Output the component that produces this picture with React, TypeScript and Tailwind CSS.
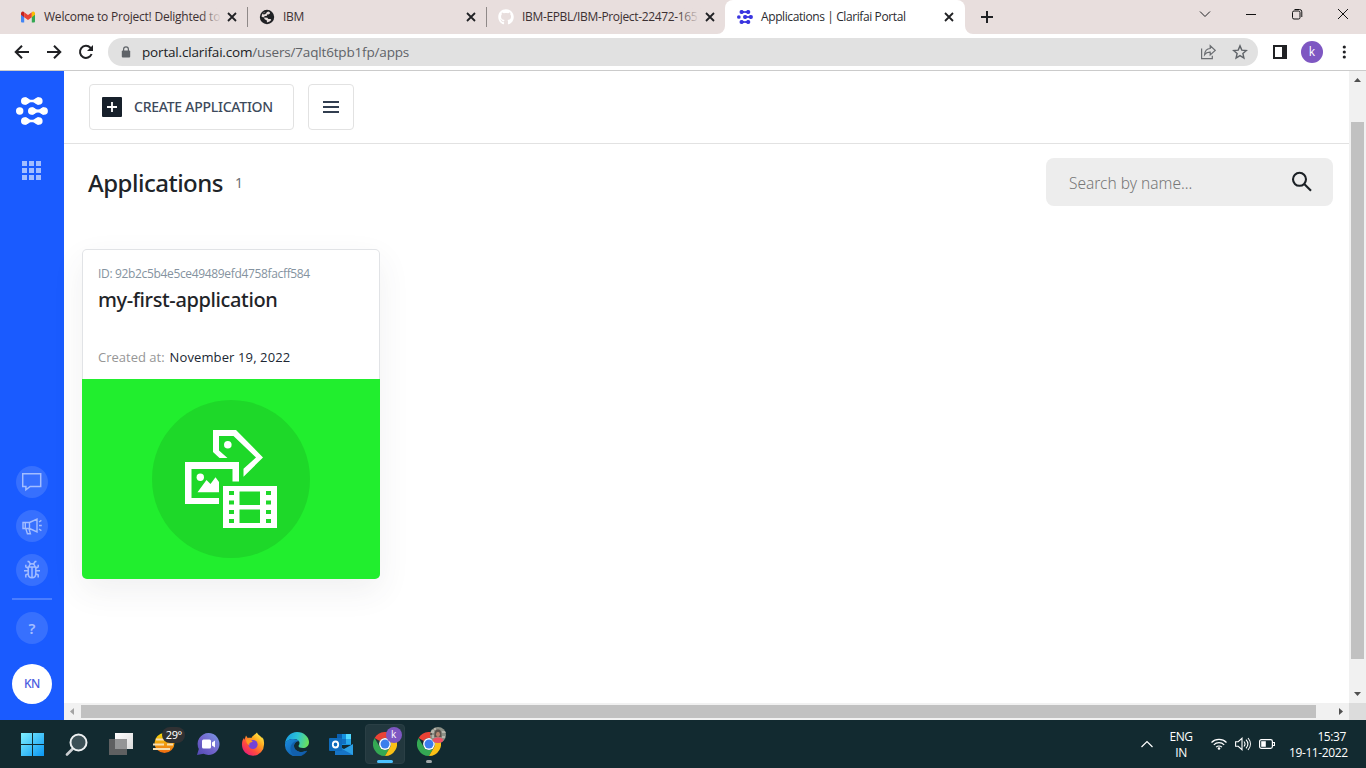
import React from "react";
import { FaGithub } from "react-icons/fa";

const CloseIcon = () => (
  <svg className="h-2.5 w-2.5 shrink-0" viewBox="0 0 10 10" fill="none" stroke="#202124" strokeWidth="1.8">
    <path d="M1 1l8 8M9 1L1 9" />
  </svg>
);

const ClarifaiLogo = ({ className, color }: { className: string; color: string }) => (
  <svg className={className} viewBox="0 0 32 28" fill={color}>
    <circle cx="8.8" cy="4" r="3.8" />
    <circle cx="22.8" cy="4" r="3.8" />
    <path d="M8.8 .2C12 .4 12.5 2.7 15.8 2.7S19.6.4 22.8 .2V7.8C19.6 7.6 19 5.3 15.8 5.3S12 7.6 8.8 7.8z" />
    <circle cx="3.7" cy="14" r="3.7" />
    <circle cx="15.8" cy="14" r="3.8" />
    <circle cx="28.1" cy="14" r="3.8" />
    <path d="M15.8 10.2C18.6 10.4 19.6 12.5 22 12.5S25.2 10.4 28 10.2V17.8C25.2 17.6 24.4 15.5 22 15.5S18.6 17.6 15.8 17.8z" />
    <circle cx="8.8" cy="24" r="3.8" />
    <circle cx="22.8" cy="24" r="3.8" />
    <path d="M8.8 20.2C12 20.4 12.5 22.7 15.8 22.7S19.6 20.4 22.8 20.2V27.8C19.6 27.6 19 25.3 15.8 25.3S12 27.6 8.8 27.8z" />
  </svg>
);

const GmailIcon = () => (
  <svg className="h-4 w-4 shrink-0" viewBox="0 0 16 16">
    <path d="M1 4.2h3.2V13.5H2A1 1 0 0 1 1 12.5z" fill="#4285f4" />
    <path d="M11.8 4.2H15v8.3a1 1 0 0 1-1 1h-2.2z" fill="#34a853" />
    <path d="M1 4.2A1.7 1.7 0 0 1 3.7 2.8L4.2 3.2V8.2L1 5.8z" fill="#c5221f" />
    <path d="M4.2 3.2L8 6.1l3.8-2.9v5L8 11.1 4.2 8.2z" fill="#ea4335" />
    <path d="M11.8 3.2l.5-.4A1.7 1.7 0 0 1 15 4.2v1.6l-3.2 2.4z" fill="#fbbc04" />
  </svg>
);

const GlobeIcon = () => (
  <svg className="h-4 w-4 shrink-0" viewBox="0 0 16 16">
    <circle cx="8" cy="8" r="7.2" fill="#202124" />
    <path d="M9.3 2.4l1.5.8.2 1.3-1.6 1.1H8.1L7.7 7H5.9L4.4 8.4l-1.9-.8.7-2.4 2-2.2 1.9.4z" fill="#e8dedd" />
    <path d="M5 8.6l3.4.1.9 1.2h2.3l.7 1-1.7 1.7-2.7 1v-2.2L5.6 10.300z" fill="#e8dedd" />
    <path d="M4 4l3-1.200.8 1-1.800 1.500-1.700.200z" fill="#202124" />
  </svg>
);

const Tab = ({ icon, label, fade }: { icon: React.ReactNode; label: React.ReactNode; fade?: boolean }) => (
  <div className="flex h-[34px] w-[239px] shrink-0 items-center pr-2.5 pl-3">
    {icon}
    <div className="relative ml-2 w-[176px] shrink-0 text-[12px] leading-5 whitespace-nowrap text-[#3c3032]">
      {label}
      {fade && <div className="absolute inset-y-0 -right-1 w-6 bg-linear-to-r from-[#e8dedd]/0 to-[#e8dedd] to-90%" />}
    </div>
    <div className="ml-auto flex">
      <CloseIcon />
    </div>
  </div>
);

const TabStrip = () => (
  <div className="flex h-[34px] items-center bg-[#e8dedd] pl-2">
    <Tab icon={<GmailIcon />} fade label={<span className="tracking-[-0.22px]">Welcome to Project! Delighted to</span>} />
    <div className="-mr-px h-5 w-px bg-[#8f8988]" />
    <Tab icon={<GlobeIcon />} label={<span className="tracking-[-0.3px]">IBM</span>} />
    <div className="-mr-px h-5 w-px bg-[#8f8988]" />
    <Tab
      icon={<FaGithub className="h-4 w-4 shrink-0 text-white" />}
      fade
      label={<span className="tracking-[-0.34px]">IBM-EPBL/IBM-Project-22472-165</span>}
    />
    <div className="relative flex h-[34px] w-[240px] items-center rounded-t-lg bg-white pr-[11px] pl-3 text-[12px]">
      <svg className="absolute bottom-0 -left-2 h-2 w-2" viewBox="0 0 8 8" fill="#fff">
        <path d="M8 0v8H0a8 8 0 0 0 8-8" />
      </svg>
      <svg className="absolute -right-2 bottom-0 h-2 w-2" viewBox="0 0 8 8" fill="#fff">
        <path d="M0 0v8h8a8 8 0 0 1-8-8" />
      </svg>
      <ClarifaiLogo className="h-4 w-4" color="#3a35e0" />
      <span className="ml-2 tracking-[-0.4px] whitespace-nowrap text-[#2b2b2f]">Applications | Clarifai Portal</span>
      <div className="ml-auto flex">
        <CloseIcon />
      </div>
    </div>
    <svg className="ml-4 h-3 w-3" viewBox="0 0 12 12" stroke="#202124" strokeWidth="2">
      <path d="M6 0v12M0 6h12" />
    </svg>
    <div className="mr-[17px] -mt-[6px] ml-auto flex items-center gap-[34px]">
      <svg className="h-3 w-3" viewBox="0 0 12 12" fill="none" stroke="#202124">
        <path d="M1 3.5l5 5 5-5" />
      </svg>
      <svg className="h-3 w-3" viewBox="0 0 12 12" stroke="#111">
        <path d="M1 6.5h10" />
      </svg>
      <svg className="h-3 w-3" viewBox="0 0 12 12" fill="none" stroke="#111">
        <rect x="1.5" y="3" width="7.5" height="8" rx="1.5" />
        <path d="M3.5 1.5H8.5a2.3 2.3 0 0 1 2.3 2.3V9" />
      </svg>
      <svg className="h-3 w-3" viewBox="0 0 12 12" fill="none" stroke="#111">
        <path d="M1 1l10 10M11 1L1 11" />
      </svg>
    </div>
  </div>
);

const Toolbar = () => (
  <div className="flex h-[37px] items-center border-b border-[#cbcbcb] bg-white">
    <svg className="ml-[14px] h-4 w-4" viewBox="0 0 16 16" fill="none" stroke="#202124" strokeWidth="2">
      <path d="M15 8H2M8 1.7L1.7 8 8 14.3" />
    </svg>
    <svg className="ml-4 h-4 w-4" viewBox="0 0 16 16" fill="none" stroke="#202124" strokeWidth="2">
      <path d="M1 8h13M8 1.7L14.3 8 8 14.3" />
    </svg>
    <svg className="ml-4 h-4 w-4" viewBox="0 0 16 16" fill="none" stroke="#202124" strokeWidth="2">
      <path d="M13.6 10A6 6 0 1 1 12.4 3.8L13.5 5" />
      <path d="M15 1v6H9z" fill="#202124" stroke="none" />
    </svg>
    <div className="ml-[14px] flex h-7 w-[1150px] items-center rounded-full bg-[#e1e1e1] pr-[10px] pl-3">
      <svg className="h-3 w-3" viewBox="0 0 12 12">
        <path d="M3.6 5V3.2a2.4 2.4 0 0 1 4.8 0V5" fill="none" stroke="#5f6368" strokeWidth="1.2" />
        <rect x="1.8" y="4.5" width="8.4" height="7" rx="1" fill="#5f6368" />
      </svg>
      <span className="ml-[10px] text-[13.5px] tracking-[-0.17px] text-[#5f6368]">
        <span className="text-[#202124]">portal.clarifai.com</span>/users/7aqlt6tpb1fp/apps
      </span>
      <svg className="ml-auto h-4 w-4" viewBox="0 0 16 16" fill="none" stroke="#6b6e72" strokeWidth="1.2">
        <path d="M1.6 4.5v10.2h10.7v-3" />
        <path d="M4.6 10.7C4.9 6.5 7 4.6 10.2 4.5V1.7l5 4.7-5 4.5V8.2C7.8 8.1 6 8.7 4.6 10.7z" />
      </svg>
      <svg className="ml-4 h-4 w-4" viewBox="0 0 16 16" fill="none" stroke="#5f6368" strokeWidth="1.4">
        <path d="M8 1.9l1.8 4.2 4.5.4-3.4 3 1 4.5L8 11.6 4.1 14l1-4.5-3.4-3 4.5-.4z" />
      </svg>
    </div>
    <svg className="ml-[15px] h-[14px] w-[14px]" viewBox="0 0 14 14">
      <path d="M0 0h14v14H0z" fill="#202124" />
      <path d="M2 2h7v10H2z" fill="#fff" />
    </svg>
    <div className="ml-[14px] flex h-[22px] w-[22px] items-center justify-center rounded-full bg-[#7e57c2] text-[12px] text-white">k</div>
    <svg className="ml-[19px] h-[14px] w-1" viewBox="0 0 4 14" fill="#202124">
      <circle cx="2.3" cy="2" r="1.6" />
      <circle cx="2.3" cy="7" r="1.6" />
      <circle cx="2.3" cy="12" r="1.6" />
    </svg>
  </div>
);

const Round = ({ children }: { children: React.ReactNode }) => (
  <div className="flex h-8 w-8 items-center justify-center rounded-full bg-[#3770fe]">{children}</div>
);

const Sidebar = () => (
  <div className="flex w-16 shrink-0 flex-col items-center bg-[#1a5bff]">
    <ClarifaiLogo className="mt-[26px] h-7 w-8" color="#fff" />
    <div className="mt-9 mr-px grid grid-cols-3 gap-[2px]">
      {Array.from({ length: 9 }, (_, i) => (
        <span key={i} className="h-[5px] w-[5px] bg-[#a3bdff]" />
      ))}
    </div>
    <div className="mt-auto flex flex-col items-center gap-3">
      <Round>
        <svg className="h-5 w-5" viewBox="0 0 20 20" fill="none" stroke="#a3bdff" strokeWidth="1.5">
          <path d="M.7 1.7h18v12.8H8.2L3.9 17.8v-3.3H.7z" />
        </svg>
      </Round>
      <Round>
        <svg className="h-5 w-5" viewBox="0 0 20 20" fill="none" stroke="#a3bdff" strokeWidth="1.4">
          <path d="M1 6.5h6.5v6H1zM3.3 6.5v6M7.5 6.5L15 3v13l-7.5-3.5M3.8 12.5l1.6 5.2h3l-1.5-5.2M17 6l2.4-1.6M17 9.5h2.8M17 13l2.4 1.6" />
        </svg>
      </Round>
      <Round>
        <svg className="h-5 w-5" viewBox="0 0 20 20" fill="none" stroke="#a3bdff" strokeWidth="1.5">
          <path d="M6.2 7h7.6v6.5c0 2.5-1.5 4.3-3.8 4.3s-3.8-1.8-3.8-4.3zM7.2 6.7C7 2.8 13 2.8 12.8 6.7M5.5 1.5h1.3L8.5 4M14.5 1.5h-1.3L11.5 4M10 7v10.7M2 10.8h4.2M13.8 10.8H18M6.2 8.5L3.8 6.9V4.8M13.8 8.500l2.4-1.6V4.8M6.3 13.7L3.8 15v2.5M13.7 13.7l2.5 1.3v2.5" />
        </svg>
      </Round>
      <div className="h-[2px] w-10 bg-[#4a7dff]" />
      <Round>
        <span className="font-['Noto_Sans',sans-serif] text-[15px] font-semibold text-[#a3bdff]">?</span>
      </Round>
    </div>
    <div className="mt-5 mb-4 flex h-10 w-10 items-center justify-center rounded-full bg-white font-['Noto_Sans',sans-serif] text-[12px] font-medium tracking-[-0.4px] text-[#4c5de0]">
      KN
    </div>
  </div>
);

const MediaArt = () => (
  <svg className="h-[158px] w-[158px]" viewBox="0 0 158 158">
    <circle cx="79" cy="79" r="79" fill="#1ed829" />
    <path fillRule="evenodd" fill="#fff" d="M61 30h23l27 27.5-19.5 19.2v-8L104 57.5 81.5 36H67v14.5l8.5 7.5h-8L61 52z" />
    <circle cx="75.8" cy="44.8" r="3.8" fill="#fff" />
    <path d="M33 62h54v19.5h-6.5V69H39.5v29H67v6H33z" fill="#fff" />
    <circle cx="48.3" cy="77.3" r="3.7" fill="#fff" />
    <path d="M45.5 92.3L54.5 80l4 4 5-6.7L67 82v10.3z" fill="#fff" />
    <path
      fillRule="evenodd"
      fill="#fff"
      d="M71 86h54v42H71zM87.5 91.5V105h20.5V91.5zM87.5 109.5V123h20.5v-13.5zM77 91h5v4h-5zM77 100.500h5v4h-5zM77 110h5v4h-5zM77 119h5v4h-5zM114 91h5v4h-5zM114 100.500h5v4h-5zM114 110h5v4h-5zM114 119h5v4h-5z"
    />
  </svg>
);

const Page = () => (
  <div className="flex min-w-0 flex-1 flex-col bg-white">
    <div className="flex h-[73px] shrink-0 items-start gap-[14px] border-b border-[#e2e2e2] pt-[13px] pl-[25px]">
      <button className="flex h-[46px] w-[205px] items-center rounded border border-[#e2e2e2] pl-3">
        <svg className="h-5 w-5" viewBox="0 0 20 20">
          <rect width="20" height="20" rx="1" fill="#17202b" />
          <path d="M10 5v10M5 10h10" stroke="#fff" strokeWidth="1.8" />
        </svg>
        <span className="ml-3 pb-0.5 font-['Noto_Sans',sans-serif] text-[14px] font-medium tracking-[-0.25px] whitespace-nowrap text-[#3d4a5c]">
          CREATE APPLICATION
        </span>
      </button>
      <button className="flex h-[46px] w-[46px] items-center justify-center rounded border border-[#e2e2e2]">
        <svg className="h-3 w-4" viewBox="0 0 16 12" fill="#323e50">
          <path d="M0 0h16v2H0zM0 5h16v2H0zM0 10h16v2H0z" />
        </svg>
      </button>
    </div>
    <div className="mt-[14px] flex h-12 items-center pr-4 pl-6 font-['Noto_Sans',sans-serif]">
      <h1 className="w-[147px] pt-0.5 text-[24px] font-medium tracking-[-0.5px] text-[#202428]">Applications</h1>
      <span className="pt-px text-[14px] text-[#6b7075]">1</span>
      <div className="ml-auto flex h-12 w-[287px] items-center justify-between rounded-lg bg-[#ededed] pr-[20px] pl-[23px]">
        <span className="pt-1 text-[15.5px] font-light text-[#777]">Search by name...</span>
        <svg className="h-[22px] w-[22px]" viewBox="0 0 22 22" fill="none" stroke="#1c2126" strokeWidth="2.1">
          <circle cx="8.5" cy="8.3" r="6.5" />
          <path d="M13 12.8l7 7" />
        </svg>
      </div>
    </div>
    <div className="mt-[43px] ml-[18px] flex h-[330px] w-[298px] flex-col overflow-hidden rounded-[5px] bg-white inset-ring inset-ring-[#e1e3e6] shadow-[0_12px_32px_rgba(60,64,80,0.08)]">
      <div className="h-[130px] pt-4 pl-4">
        <div className="text-[12px] leading-[18px] tracking-[-0.34px] text-[#8593a0]">ID: 92b2c5b4e5ce49489efd4758facff584</div>
        <div className="mt-[5px] font-['Noto_Sans',sans-serif] text-[20px] leading-6 font-medium tracking-[-0.37px] text-[#1f2428]">
          my-first-application
        </div>
        <div className="mt-[35px] flex gap-[5px] text-[13px] leading-5">
          <span className="text-[#969696]">Created at:</span>
          <span className="tracking-[0.12px] text-[#202733]">November 19, 2022</span>
        </div>
      </div>
      <div className="flex flex-1 items-center justify-center bg-[#21ee2e]">
        <MediaArt />
      </div>
    </div>
  </div>
);

const ScrollbarV = () => (
  <div className="flex w-[17px] shrink-0 flex-col items-center bg-[#f1f1f1]">
    <svg className="mt-[7px] h-1 w-[7px]" viewBox="0 0 7 4" fill="#505050">
      <path d="M3.5 0L7 4H0z" />
    </svg>
    <div className="mt-10 h-[537px] w-[13px] bg-[#c1c1c1]" />
    <svg className="mt-[33px] h-1 w-[7px]" viewBox="0 0 7 4" fill="#505050">
      <path d="M0 0h7L3.5 4z" />
    </svg>
    <div className="mt-auto h-[17px] w-[17px] bg-[#dcdcdc]" />
  </div>
);

const ScrollbarH = () => (
  <div className="flex h-[17px] shrink-0 items-center bg-[#f1f1f1]">
    <svg className="ml-1.5 h-[7px] w-1" viewBox="0 0 4 7" fill="#a3a3a3">
      <path d="M4 0v7L0 3.5z" />
    </svg>
    <div className="ml-[7px] h-[13px] w-[1235px] bg-[#c1c1c1]" />
    <svg className="ml-[23px] h-[7px] w-1" viewBox="0 0 4 7" fill="#505050">
      <path d="M0 0l4 3.5L0 7z" />
    </svg>
  </div>
);

const Cell = ({ children }: { children: React.ReactNode }) => (
  <div className="relative flex h-12 w-[44.1px] items-center justify-center">{children}</div>
);

const ChromeIcon = () => (
  <svg className="h-6 w-6" viewBox="0 0 24 24">
    <path d="M1.6 6A12 12 0 0 1 22.4 6H12A6 6 0 0 0 6.8 9z" fill="#ea4335" />
    <path d="M1.6 6A12 12 0 0 0 12 24l5.2-9A6 6 0 0 1 6.8 15z" fill="#34a853" />
    <path d="M12 24A12 12 0 0 0 22.4 6H12a6 6 0 0 1 5.2 9z" fill="#fbc116" />
    <circle cx="12" cy="12" r="5.9" fill="#fff" />
    <circle cx="12" cy="12" r="4.5" fill="#3b7ded" />
  </svg>
);

const Taskbar = () => (
  <div className="flex h-12 items-center bg-[#122a30] pl-[10px] text-white">
    <Cell>
      <svg className="h-[23px] w-[23px]" viewBox="0 0 23 23">
        <defs>
          <linearGradient id="win" x1="0" y1="0" x2="1" y2="1">
            <stop stopColor="#80f0ff" />
            <stop offset="1" stopColor="#0996f3" />
          </linearGradient>
        </defs>
        <path d="M0 0h11v11H0zM12 0h11v11H12zM0 12h11v11H0zM12 12h11v11H12z" fill="url(#win)" />
      </svg>
    </Cell>
    <Cell>
      <svg className="ml-px h-[23px] w-[23px]" viewBox="0 0 23 23" fill="none" strokeLinecap="round">
        <path d="M7.5 16L2 21.5" stroke="#c9cdd0" strokeWidth="2.6" />
        <circle cx="13.5" cy="9.5" r="8" fill="#3d5157" stroke="#eef1f2" strokeWidth="2" />
      </svg>
    </Cell>
    <Cell>
      <svg className="ml-px h-[22px] w-6" viewBox="0 0 24 22">
        <defs>
          <linearGradient id="view" x1="0" y1="0" x2="1" y2="1">
            <stop stopColor="#fff" />
            <stop offset="1" stopColor="#d9d9d9" />
          </linearGradient>
        </defs>
        <path d="M6 0h18v16H6z" fill="url(#view)" />
        <path d="M0 6h18v16H0z" fill="#5f6061" />
        <path d="M6 6h12v10H6z" fill="#949596" />
      </svg>
    </Cell>
    <Cell>
      <svg className="h-6 w-6" viewBox="0 0 24 24">
        <defs>
          <linearGradient id="sun" x1="0" y1="0" x2="0" y2="1">
            <stop stopColor="#f5d90a" />
            <stop offset="1" stopColor="#ee6a12" />
          </linearGradient>
        </defs>
        <circle cx="12.5" cy="11" r="10" fill="url(#sun)" />
        <path d="M4 7.500h8M1 12.500h11M15 12.500h6M1 17h17" stroke="#f6deb0" strokeWidth="1.8" />
      </svg>
      <span className="absolute top-[7px] left-[20px] flex h-4 w-[23px] items-center justify-center rounded-full bg-[#303133] font-['Noto_Sans',sans-serif] text-[11px] tracking-[-0.4px]">
        29°
      </span>
    </Cell>
    <Cell>
      <svg className="h-6 w-6" viewBox="0 0 24 24">
        <defs>
          <linearGradient id="chat" x1="1" y1="0" x2="0" y2="1">
            <stop stopColor="#7a9be6" />
            <stop offset=".5" stopColor="#7467cd" />
            <stop offset="1" stopColor="#5148b3" />
          </linearGradient>
        </defs>
        <path d="M12.5 1a11 11 0 1 1-5 20.8L1 23l1.800-6A11 11 0 0 1 12.5 1z" fill="url(#chat)" />
        <rect x="6" y="7.5" width="9" height="9" rx="1.5" fill="#fff" />
        <path d="M16 10.500l3-2v7l-3-2z" fill="#fff" />
      </svg>
    </Cell>
    <Cell>
      <svg className="h-6 w-6" viewBox="0 0 24 24">
        <defs>
          <linearGradient id="fox" x1="1" y1="0" x2="0.2" y2="1">
            <stop offset=".1" stopColor="#fff04a" />
            <stop offset=".4" stopColor="#ffa51f" />
            <stop offset=".7" stopColor="#ff4b3d" />
            <stop offset="1" stopColor="#e5187e" />
          </linearGradient>
        </defs>
        <path d="M16 .5c1 3 4 3.200 5.300 6 .3-.5.200-1 .200-1.500 1.300 2.500 1.800 5 1.500 7.500a11 11 0 0 1-22 .5C.8 9.500 2 7 3 6l.4 2L5 3.500l1.700 2.400c1.300-.4 2.500-.3 3.700.2C11 4 14.500 2.500 16 .5z" fill="url(#fox)" />
        <circle cx="12" cy="12.5" r="4.6" fill="#7542d8" />
        <path d="M5 7.500c2.500-.5 5 .2 6.700 2.200l-2 .8c-1.500.4-1.700 2-1 3-2.500-1-3.500-3-3.700-6z" fill="#ff9a20" />
      </svg>
    </Cell>
    <Cell>
      <svg className="h-6 w-6" viewBox="0 0 24 24">
        <defs>
          <linearGradient id="edgeTop" x1="0" y1=".3" x2="1" y2=".5">
            <stop stopColor="#179be5" />
            <stop offset=".5" stopColor="#2cc3d4" />
            <stop offset="1" stopColor="#6be05a" />
          </linearGradient>
          <linearGradient id="edgeLow" x1="0" y1="0" x2="1" y2="1">
            <stop stopColor="#1b8bdc" />
            <stop offset="1" stopColor="#0d4f9c" />
          </linearGradient>
        </defs>
        <path d="M0 12C.5 5 5.500 0 12 0c7 0 12 5 12 10 0 4-3 6-6 6-3 0-4.500-1-4.500-2 0-.8 1-1 1-3 0-2.500-3-4-6-4C4.500 7 1 9 0 12z" fill="url(#edgeTop)" />
        <path d="M0 12c1-3.500 4.500-5 8.500-5 2.500 0 4.500 1 5.400 2.200C11 8.800 9 11.500 9 14c0 3.500 3.500 6 7.500 6 2.500 0 4.500-1.300 5.200-1.200.4.100.3.600 0 1A12 12 0 0 1 0 12z" fill="url(#edgeLow)" />
        <path d="M13.900 9.200C11 8.800 9 11.500 9 14c0 3.500 3.500 6 7.500 6 2 0 3.500-.7 4.500-1-2 3-5.500 5-9 5-3.500 0-6.500-3.500-6.500-7.500 0-4.500 4-8 8.400-7.300z" fill="#1260ad" />
      </svg>
    </Cell>
    <Cell>
      <svg className="h-[23px] w-6" viewBox="0 0 24 23">
        <path d="M8 1h14v11H8z" fill="#1490df" />
        <path d="M8 1h5v5H8z" fill="#0b5faf" />
        <path d="M17 1h5v5h-5z" fill="#50d9ff" />
        <path d="M13 6h4v5h-4z" fill="#1272c4" />
        <path d="M17 6h5v5h-5z" fill="#28a8ea" />
        <path d="M6 12l9 4 9-5v11H6z" fill="#2b9fe5" />
        <path d="M6 12l18 10H6z" fill="#1674c6" />
        <rect y="5" width="13" height="13" rx="1" fill="#0f6cbd" />
        <ellipse cx="6.5" cy="11.5" rx="2.7" ry="3" fill="none" stroke="#fff" strokeWidth="1.8" />
      </svg>
    </Cell>
    <Cell>
      <div className="flex h-10 w-10 items-center justify-center rounded border border-[#2a3f45] bg-[#22383e]">
        <ChromeIcon />
      </div>
      <span className="absolute top-[7px] left-[23px] flex h-4 w-4 items-center justify-center rounded-full bg-[#7e57c2] pb-px text-[10px] font-medium">
        k
      </span>
      <span className="absolute top-10 left-[14px] h-[3px] w-4 rounded-full bg-[#4cc2ff]" />
    </Cell>
    <Cell>
      <ChromeIcon />
      <svg className="absolute top-[7px] left-[23px] h-4 w-4" viewBox="0 0 16 16">
        <defs>
          <clipPath id="photo">
            <circle cx="8" cy="8" r="8" />
          </clipPath>
        </defs>
        <g clipPath="url(#photo)">
          <path d="M0 0h16v16H0z" fill="#8c9086" />
          <path d="M1 3h3v3H1zM12 4h4v2h-4zM2 8h2v3H2zM12 9h3v2h-3zM4 1h2v2H4z" fill="#b5b4aa" />
          <path d="M8 2.500c3 0 3.800 2.500 3.500 7.500h-7C4.200 5 5 2.500 8 2.500zM0 6h2v2H0z" fill="#5b524c" />
          <ellipse cx="8" cy="7.3" rx="2" ry="2.6" fill="#b78670" />
          <path d="M3 12.500c1-1.500 3-2 5-2s4 .5 5 2V16H3z" fill="#ec5064" />
        </g>
      </svg>
      <span className="absolute top-10 left-[19px] h-[3px] w-1.5 rounded-full bg-[#a0a7a9]" />
    </Cell>

    <div className="mr-5 ml-auto flex items-center text-[12px] leading-4">
      <svg className="h-2 w-3" viewBox="0 0 12 8" fill="none" stroke="#fff" strokeWidth="1.2">
        <path d="M.5 7L6 1.500 11.500 7" />
      </svg>
      <div className="ml-4 w-6 pt-0.5 text-center tracking-[-0.5px]">
        ENG
        <br />
        IN
      </div>
      <svg className="ml-[18px] h-3 w-4" viewBox="0 0 16 12" fill="none" stroke="#fff" strokeWidth="1.2">
        <path d="M.5 4.500a10.500 10.500 0 0 1 15 0M2.800 6.900a7.300 7.300 0 0 1 10.400 0M5.100 9.200a4.100 4.100 0 0 1 5.800 0" />
        <circle cx="8" cy="10.5" r="1.3" fill="#fff" stroke="none" />
      </svg>
      <svg className="ml-2 h-[14px] w-4" viewBox="0 0 16 14" fill="none" stroke="#fff" strokeWidth="1.1">
        <path d="M.6 4.700h2.600L7 1.300v11.400L3.200 9.300H.6z" />
        <path d="M9 4.500c1.200 1.500 1.200 3.500 0 5M11 2.700c2.300 2.600 2.300 6 0 8.600M13 1c3.200 3.600 3.200 8.400 0 12" />
      </svg>
      <svg className="ml-2 h-[10px] w-4" viewBox="0 0 16 10" fill="none" stroke="#fff" strokeWidth="1.2">
        <rect x=".6" y=".6" width="12.8" height="8.8" rx="1.8" />
        <path d="M2.200 2.200h4.600v5.600H2.200z" fill="#fff" stroke="none" />
        <path d="M14 3.500h1.500v3H14" />
      </svg>
      <div className="ml-[14px] w-[57px] pt-0.5 text-right text-[12px] tracking-[-0.4px] whitespace-nowrap">
        15:37
        <br />
        19-11-2022
      </div>
    </div>
  </div>
);

export default function App() {
  return (
    <div className="flex h-[768px] w-[1366px] flex-col overflow-hidden bg-white font-['Open_Sans','Noto_Sans',sans-serif]">
      <TabStrip />
      <Toolbar />
      <div className="flex min-h-0 flex-1">
        <Sidebar />
        <div className="flex min-w-0 flex-1 flex-col">
          <Page />
          <ScrollbarH />
        </div>
        <ScrollbarV />
      </div>
      <Taskbar />
    </div>
  );
}
